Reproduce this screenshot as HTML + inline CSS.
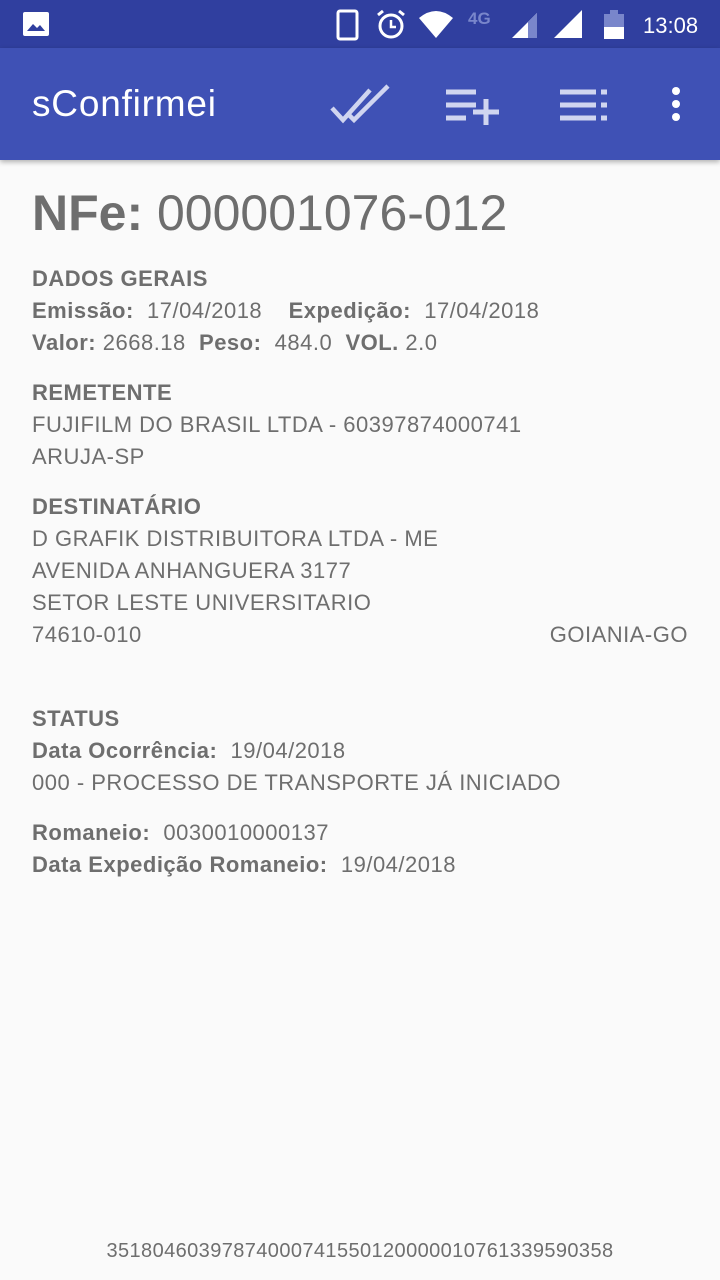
<!DOCTYPE html>
<html><head><meta charset="utf-8"><style>
body{margin:0;width:720px;height:1280px;background:#fafafa;font-family:"Liberation Sans",sans-serif;overflow:hidden;position:relative;color:#6e6e6e}
.sb{position:absolute;top:0;left:0;width:720px;height:48px;background:#303f9f}
.tb{position:absolute;top:48px;left:0;width:720px;height:112px;background:#3f51b5;box-shadow:0 2px 5px rgba(0,0,0,.3)}
.l{position:absolute;left:32px;font-size:22px;line-height:32px;white-space:pre;letter-spacing:0.5px}
b{font-weight:bold}
</style></head><body>
<div class="sb">
<svg width="720" height="48" style="position:absolute;left:0;top:0">
<rect x="23" y="12" width="26" height="24" rx="2" fill="#fff"/><path d="M27 31l6-7 4 4 3-3 5 6z" fill="#303f9f"/>
<rect x="338" y="11" width="19" height="28" rx="2" fill="none" stroke="#fff" stroke-width="3"/>
<circle cx="391" cy="26" r="11" fill="none" stroke="#fff" stroke-width="3"/><path d="M391 20v7h5" stroke="#fff" stroke-width="2.5" fill="none"/><path d="M378 15l5-4M404 15l-5-4" stroke="#fff" stroke-width="3"/>
<path d="M419 18q17-14 34 0l-17 20z" fill="#fff"/>
<text x="468" y="24" fill="#7986cb" font-size="17" font-weight="bold" font-family="Liberation Sans">4G</text>
<path d="M512 38l25-25v25z" fill="#fff"/><path d="M528 22l9-9v25h-9z" fill="#7986cb"/>
<path d="M554 38l28-28v28z" fill="#fff"/>
<rect x="604" y="14" width="20" height="25" fill="#7986cb"/><rect x="610" y="10" width="8" height="5" fill="#7986cb"/><rect x="604" y="27" width="20" height="12" fill="#fff"/>
<text x="643" y="33" fill="#fff" font-size="22" font-family="Liberation Sans">13:08</text>
</svg></div>
<div class="tb">
<div style="position:absolute;left:32px;top:35px;color:#fff;font-size:37px;letter-spacing:0.8px">sConfirmei</div>
<svg width="720" height="112" style="position:absolute;left:0;top:0">
<path d="M332 60l11 12l27-30M347 65l7 7l34-34" stroke="#d0d5f0" stroke-width="4.5" fill="none"/>
<path d="M446 44h30M446 57h30M446 70h20M473 64h26M486 51v26" stroke="#d0d5f0" stroke-width="5"/>
<path d="M560 44h36M560 57h36M560 70h36M601 44h6M601 57h6M601 70h6" stroke="#d0d5f0" stroke-width="5"/>
<circle cx="676" cy="43" r="4" fill="#fff"/><circle cx="676" cy="56" r="4" fill="#fff"/><circle cx="676" cy="69" r="4" fill="#fff"/>
</svg></div>
<div class="l" style="top:183px;font-size:50px;line-height:60px;letter-spacing:0"><b>NFe:</b> 000001076-012</div>
<div class="l" style="top:263px"><b>DADOS GERAIS</b></div>
<div class="l" style="top:295px"><b>Emissão:</b>  17/04/2018    <b>Expedição:</b>  17/04/2018</div>
<div class="l" style="top:327px"><b>Valor:</b> 2668.18  <b>Peso:</b>  484.0  <b>VOL.</b> 2.0</div>
<div class="l" style="top:377px"><b>REMETENTE</b></div>
<div class="l" style="top:409px">FUJIFILM DO BRASIL LTDA - 60397874000741</div>
<div class="l" style="top:441px">ARUJA-SP</div>
<div class="l" style="top:491px"><b>DESTINATÁRIO</b></div>
<div class="l" style="top:523px">D GRAFIK DISTRIBUITORA LTDA - ME</div>
<div class="l" style="top:555px">AVENIDA ANHANGUERA 3177</div>
<div class="l" style="top:587px">SETOR LESTE UNIVERSITARIO</div>
<div class="l" style="top:619px">74610-010</div>
<div class="l" style="top:619px;left:auto;right:32px">GOIANIA-GO</div>
<div class="l" style="top:703px"><b>STATUS</b></div>
<div class="l" style="top:735px"><b>Data Ocorrência:</b>  19/04/2018</div>
<div class="l" style="top:767px">000 - PROCESSO DE TRANSPORTE JÁ INICIADO</div>
<div class="l" style="top:817px"><b>Romaneio:</b>  0030010000137</div>
<div class="l" style="top:849px"><b>Data Expedição Romaneio:</b>  19/04/2018</div>
<div class="l" style="top:1235px;left:0;width:720px;text-align:center;font-size:20px;letter-spacing:0.4px">35180460397874000741550120000010761339590358</div>
</body></html>
